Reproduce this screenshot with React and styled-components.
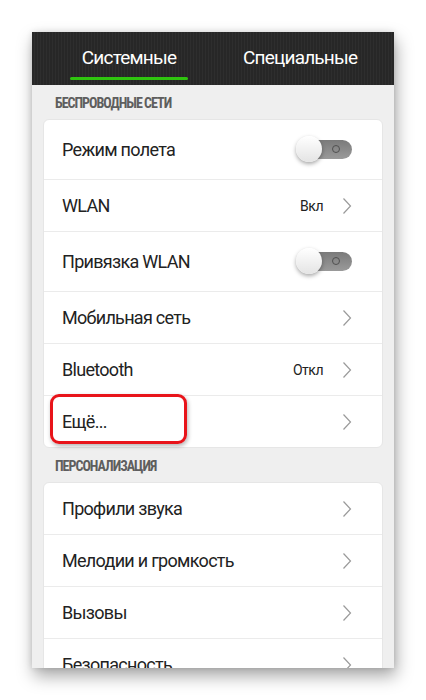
import React from "react";
import styled, { createGlobalStyle } from "styled-components";

const Global = createGlobalStyle`
  html, body { margin: 0; padding: 0; background: #ffffff; }
  body { font-family: 'Roboto', 'Noto Sans', sans-serif; }
`;

const wireless = [
  { title: "Режим полета", toggle: true },
  { title: "WLAN", value: "Вкл" },
  { title: "Привязка WLAN", toggle: true },
  { title: "Мобильная сеть" },
  { title: "Bluetooth", value: "Откл" },
  { title: "Ещё...", marked: true },
];

const personal = [
  { title: "Профили звука" },
  { title: "Мелодии и громкость" },
  { title: "Вызовы" },
  { title: "Безопасность" },
];

const Chevron = () => (
  <svg width="10" height="18" viewBox="0 0 10 18">
    <path d="M1.5 1.5 L8.5 9 L1.5 16.5" fill="none" stroke="#9a9a9a" strokeWidth="1.2" />
  </svg>
);

const App = () => {
  const renderRow = (r) => (
    <Row key={r.title} tall={r.toggle}>
      <Title>{r.title}</Title>
      {r.marked && <Marker />}
      {r.toggle ? (
        <Switch>
          <Knob />
          <Dot />
        </Switch>
      ) : (
        <Right>
          {r.value && <Value>{r.value}</Value>}
          <Chevron />
        </Right>
      )}
    </Row>
  );

  return (
    <Page>
      <Global />
      <Screen>
        <Tabs>
          <Tab active>Системные</Tab>
          <Tab>Специальные</Tab>
        </Tabs>
        <Body>
          <Label>БЕСПРОВОДНЫЕ СЕТИ</Label>
          <Card>{wireless.map(renderRow)}</Card>
          <Label>ПЕРСОНАЛИЗАЦИЯ</Label>
          <Card>{personal.map(renderRow)}</Card>
        </Body>
      </Screen>
    </Page>
  );
};

const Page = styled.div`
  width: 426px;
  height: 700px;
  padding: 32px 0 0 32px;
  box-sizing: border-box;
`;

const Screen = styled.div`
  width: 362px;
  height: 636px;
  background: #efefef;
  overflow: hidden;
  display: flex;
  flex-direction: column;
  box-shadow: 2px 8px 16px rgba(0, 0, 0, 0.35), 0 0 6px rgba(0, 0, 0, 0.12);
`;

const Tabs = styled.div`
  height: 53px;
  flex-shrink: 0;
  display: flex;
  padding: 0 10px 0 38px;
  background: repeating-linear-gradient(90deg, #272727 0px, #272727 2px, #2e2e2e 2px, #2e2e2e 3px);
`;

const Tab = styled.div`
  flex: 0 0 ${(p) => (p.active ? "118px" : "auto")};
  margin-left: ${(p) => (p.active ? "0" : "55px")};
  display: flex;
  align-items: center;
  justify-content: center;
  position: relative;
  padding-bottom: 2px;
  color: #ffffff;
  font-size: 19px;
  letter-spacing: -0.8px;
  &::after {
    content: "";
    display: ${(p) => (p.active ? "block" : "none")};
    position: absolute;
    left: 0;
    right: 0;
    bottom: 5px;
    height: 3px;
    border-radius: 2px;
    background: #2fc40f;
  }
`;

const Body = styled.div`
  padding: 0 11px;
  display: flex;
  flex-direction: column;
`;

const Label = styled.div`
  height: 34px;
  display: flex;
  align-items: center;
  padding: 1px 0 0 12px;
  box-sizing: border-box;
  color: #5e5e5e;
  font-family: 'Roboto Condensed', 'Liberation Sans Narrow', 'Roboto', sans-serif;
  font-size: 14px;
  font-weight: 700;
  letter-spacing: -1px;
`;

const Card = styled.div`
  background: #ffffff;
  border-radius: 6px;
  border: 1px solid #e6e6e6;
  display: flex;
  flex-direction: column;
`;

const Row = styled.div`
  height: ${(p) => (p.tall ? "59px" : "51px")};
  display: flex;
  align-items: center;
  justify-content: space-between;
  padding: 0 30px 0 18px;
  border-top: 1px solid #ebebeb;
  position: relative;
  &:first-child { border-top: none; }
`;

const Title = styled.div`
  color: #222222;
  font-size: 18px;
  letter-spacing: -0.7px;
`;

const Right = styled.div`
  display: flex;
  align-items: center;
  gap: 19px;
`;

const Value = styled.div`
  color: #222222;
  font-size: 14px;
  letter-spacing: -0.5px;
`;

const Switch = styled.div`
  width: 55px;
  height: 19px;
  border-radius: 10px;
  background: linear-gradient(180deg, #7a7a7a, #9a9a9a);
  position: relative;
`;

const Knob = styled.div`
  position: absolute;
  left: -1px;
  top: -4px;
  width: 26px;
  height: 26px;
  border-radius: 50%;
  background: linear-gradient(180deg, #ffffff, #e4e4e4);
  box-shadow: 0 2px 4px rgba(0, 0, 0, 0.35);
`;

const Dot = styled.div`
  position: absolute;
  right: 12px;
  top: 5px;
  width: 8px;
  height: 8px;
  border-radius: 50%;
  border: 1.3px solid #505050;
  box-sizing: border-box;
`;

const Marker = styled.div`
  position: absolute;
  left: 6px;
  top: -2px;
  width: 137px;
  height: 50px;
  box-sizing: border-box;
  border: 3px solid #e8141a;
  border-radius: 9px;
  box-shadow: 1px 2px 4px rgba(0, 0, 0, 0.3);
`;

export default App;
